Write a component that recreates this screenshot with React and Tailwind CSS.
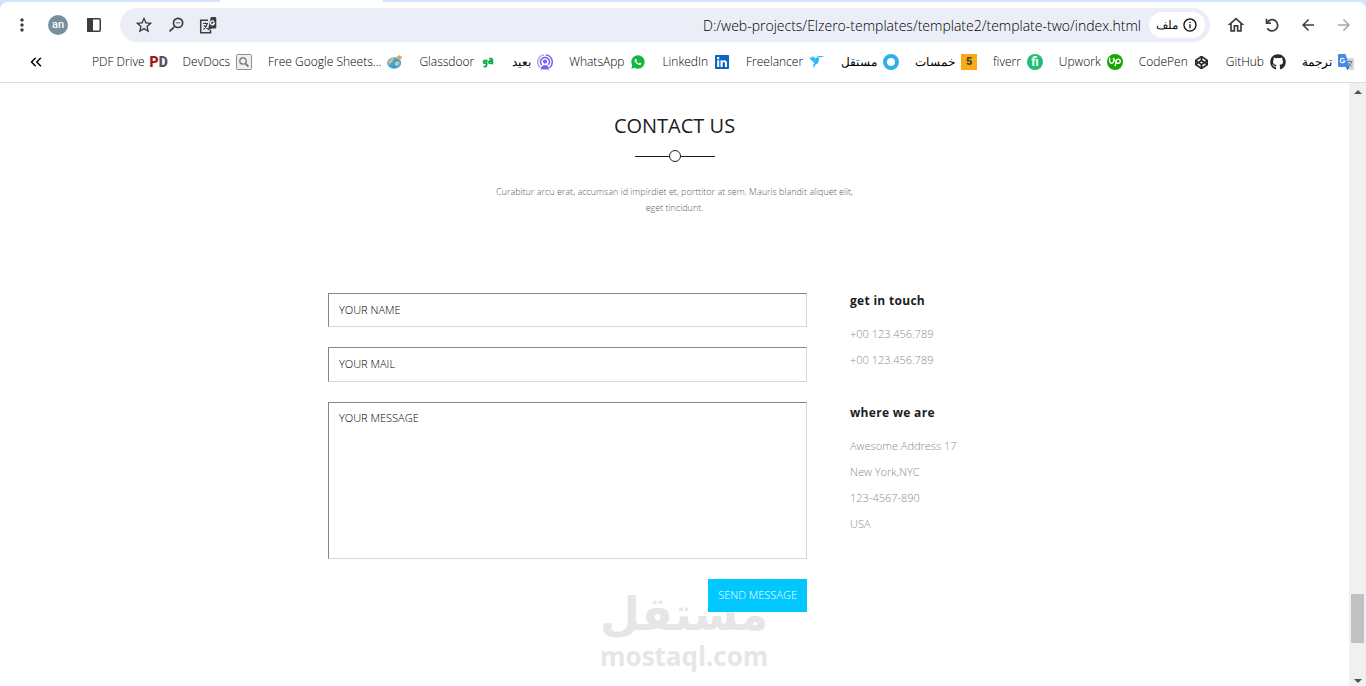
import { FaCodepen, FaGithub, FaLinkedin } from 'react-icons/fa';
import { MdArrowBack, MdArrowForward, MdInfoOutline, MdMoreVert, MdOutlineHome, MdOutlineZoomOut, MdStarBorder } from 'react-icons/md';
import { RiWhatsappFill } from 'react-icons/ri';
import { SiFreelancer, SiUpwork } from 'react-icons/si';
import { ChevronsLeft } from 'lucide-react';

const PdfDriveIcon = () => (
    <span className="flex h-4 w-4 items-center justify-center font-['Roboto',sans-serif] text-[14px] leading-4 font-black">
        <span className="text-[#a01818]">P</span>
        <span className="text-[#55555a]">D</span>
    </span>
);

const DevDocsIcon = () => (
    <svg width="16" height="16" viewBox="0 0 16 16" fill="none">
        <rect x="0.5" y="0.5" width="15" height="15" rx="1" fill="#eeeeee" stroke="#8e8e8e" />
        <circle cx="7" cy="7" r="3.2" stroke="#777" strokeWidth="1.3" />
        <path d="M9.4 9.4 12.4 12.6" stroke="#777" strokeWidth="1.8" />
    </svg>
);

const SheetsIcon = () => (
    <svg width="16" height="16" viewBox="0 0 16 16">
        <ellipse cx="7.2" cy="9" rx="7" ry="5.8" fill="#35a9dd" />
        <path d="M1 8.5c.8-2.6 3-4.4 5.4-4.8l1 1.5-2 1 .5 1.8-2.4 1.3L3 11.5z" fill="#d9b98a" />
        <path d="M8 8.2l3-1 1.8 1.6-1.2 2.5-2.6.7-1.4-2z" fill="#d3c497" />
        <path d="M5.5 12.2l2-.6 1 1.6-1.6 1.2z" fill="#5b83a8" />
        <path d="M9 1.5l2 1 1.4-1.8.8 1.7 2-.9-1 2.3.6 2-2.4-1.1-2.2.9.3-2z" fill="#f29a38" />
    </svg>
);

const GlassdoorIcon = () => (
    <svg width="16" height="16" viewBox="0 0 16 16" fill="none" stroke="#0caa41" strokeWidth="1.8">
        <path d="M6.6 5.5v5.2c0 1.3-1 1.9-2.2 1.9H3.6M6.6 6.6H5c-1.100 0-1.400.5-1.400 1.300s.5 1.300 1.400 1.300h1.600" />
        <path d="M9 4.600h2c.8 0 1.300.4 1.300 1.200v3.600h-2c-.9 0-1.400-.4-1.400-1.200s.5-1.200 1.400-1.200h2" />
    </svg>
);

const BaeedIcon = () => (
    <svg width="16" height="16" viewBox="0 0 16 16" fill="none" strokeLinecap="round">
        <path d="M3 13.2A7.2 7.2 0 0 1 6.5.9" stroke="#a9b4cf" strokeWidth="1.5" />
        <path d="M9.5.9A7.2 7.2 0 0 1 13 13.2" stroke="#7664f6" strokeWidth="1.5" />
        <path d="M4.4 10.5a4.4 4.4 0 1 1 7.2 0" stroke="#7664f6" strokeWidth="1.5" />
        <circle cx="8" cy="7.6" r="2.1" fill="#7664f6" />
        <path d="M3.8 15.5c.3-3 1.9-4.4 4.2-4.4s3.9 1.4 4.2 4.4z" fill="#7664f6" />
    </svg>
);

const FiverrIcon = () => (
    <span className="flex h-4 w-4 items-center justify-center rounded-full bg-[#1dbf73] font-['Roboto',sans-serif] text-[12px] leading-4 font-bold text-white">
        fi
    </span>
);

const UpworkIcon = () => (
    <span className="flex h-4 w-4 items-center justify-center rounded-full bg-[#14a800]">
        <SiUpwork size={12} color="#fff" />
    </span>
);

const KhamsatIcon = () => (
    <span className="flex h-4 w-4 items-center justify-center bg-[#f8ab12] font-['Roboto',sans-serif] text-[11px] leading-4 font-black text-[#4a4030]">
        5
    </span>
);

const CodepenIcon = () => (
    <span className="flex h-4 w-4 items-center justify-center">
        <FaCodepen size={13} color="#1e1f21" stroke="#1e1f21" strokeWidth={24} />
    </span>
);

const TranslateIcon = () => (
    <svg width="16" height="16" viewBox="0 0 16 16" fill="none">
        <path d="M6 4h9a1 1 0 0 1 1 1v10a1 1 0 0 1-1 1H9.5z" fill="#d6d8dc" />
        <path d="M9.5 7.5h5M12 6.3v1.2M13.6 7.5c-.4 2.2-1.7 3.7-3.4 4.7M10.6 9c.7 1.5 1.8 2.6 3.2 3.3" stroke="#6b7c93" />
        <path d="M1 0h6.5l4 13H1a1 1 0 0 1-1-1V1a1 1 0 0 1 1-1z" fill="#4889e4" />
        <path d="M8 13h3.5L9.2 16z" fill="#3563b8" />
        <path d="M6.4 5A2.3 2.3 0 1 0 6.9 7H4.7" stroke="#fff" strokeWidth="1.1" />
    </svg>
);

const TranslatePageIcon = () => (
    <svg width="18" height="18" viewBox="0 0 18 18" fill="none">
        <path d="M9 4.3H1.7v12.4H11.5V14" stroke="#3c3d40" strokeWidth="1.5" />
        <path d="M4 7.5h5M6.5 6.5v1M8.2 7.5c-.6 2.8-2 4.8-3.8 6M4.8 9.5l4 3.5" stroke="#3c3d40" strokeWidth="1.2" />
        <path d="M11.8 1H16a1.3 1.3 0 0 1 1.3 1.3v9A1.3 1.3 0 0 1 16 12.6h-3L8.8 14.5z" fill="#3c3d40" />
        <path d="M15 5.6a2 2 0 1 0 .4 1.6h-1.8" stroke="#fff" strokeWidth="1.2" />
    </svg>
);

const bookmarks = [
    { label: 'PDF Drive', icon: <PdfDriveIcon /> },
    { label: 'DevDocs', icon: <DevDocsIcon /> },
    { label: 'Free Google Sheets...', icon: <SheetsIcon /> },
    { label: 'Glassdoor', icon: <GlassdoorIcon /> },
    { label: 'بعيد', icon: <BaeedIcon /> },
    { label: 'WhatsApp', icon: <RiWhatsappFill size={16} color="#12b83f" /> },
    { label: 'LinkedIn', icon: <FaLinkedin size={16} color="#0a66c2" /> },
    { label: 'Freelancer', icon: <SiFreelancer size={16} color="#29b2fe" /> },
    { label: 'مستقل', icon: <span className="h-4 w-4 rounded-full border-4 border-[#2fb0ec]" /> },
    { label: 'خمسات', icon: <KhamsatIcon /> },
    { label: 'fiverr', icon: <FiverrIcon /> },
    { label: 'Upwork', icon: <UpworkIcon /> },
    { label: 'CodePen', icon: <CodepenIcon /> },
    { label: 'GitHub', icon: <FaGithub size={16} color="#24292f" /> },
    { label: 'ترجمة', icon: <TranslateIcon /> },
];

function IconButton({ label, children }) {
    return (
        <button type="button" aria-label={label} className="flex h-5 w-5 shrink-0 items-center justify-center">
            {children}
        </button>
    );
}

function Toolbar() {
    return (
        <div className="flex items-center gap-4 px-3 text-[#3c3d40]">
            <IconButton label="Menu"><MdMoreVert size={20} /></IconButton>
            <button type="button" className="h-5 w-5 shrink-0 rounded-full bg-[#78909c] font-['Roboto',sans-serif] text-[11px] leading-5 font-medium text-white">
                an
            </button>
            <IconButton label="Side panel">
                <svg width="16" height="16" viewBox="0 0 16 16" fill="none">
                    <rect x="1.75" y="1.75" width="12.5" height="12.5" rx="1" stroke="currentColor" strokeWidth="1.5" />
                    <path d="M1 1h6v14H1z" fill="currentColor" />
                </svg>
            </IconButton>
            <div className="flex h-[34px] min-w-0 flex-1 items-center gap-3 rounded-full bg-[#ebeef7] pr-[5px] pl-[14px]">
                <IconButton label="Bookmark"><MdStarBorder size={20} /></IconButton>
                <IconButton label="Zoom"><MdOutlineZoomOut size={20} className="-scale-x-100" /></IconButton>
                <IconButton label="Translate"><TranslatePageIcon /></IconButton>
                <div className="flex min-w-0 flex-1 items-center gap-2">
                    <input
                        aria-label="Address"
                        defaultValue="D:/web-projects/Elzero-templates/template2/template-two/index.html"
                        className="min-w-0 flex-1 bg-transparent text-right text-[14px] text-black outline-none"
                    />
                    <button type="button" className="flex h-[26px] shrink-0 items-center gap-1 rounded-full bg-white px-[7px] text-[12px] text-[#101114]">
                        ملف
                        <MdInfoOutline size={16} />
                    </button>
                </div>
            </div>
            <IconButton label="Home"><MdOutlineHome size={20} /></IconButton>
            <IconButton label="Reload">
                <svg width="16" height="16" viewBox="0 0 16 16" fill="none" stroke="currentColor" strokeWidth="1.7">
                    <path d="M2.5 1.8v4.4h4.4" />
                    <path d="M3 6A5.6 5.6 0 1 1 3.3 11.2" />
                </svg>
            </IconButton>
            <IconButton label="Back"><MdArrowBack size={18} /></IconButton>
            <IconButton label="Forward"><MdArrowForward size={18} color="#a5a6a9" /></IconButton>
        </div>
    );
}

function BookmarksBar() {
    return (
        <nav className="flex h-10 items-center justify-between pr-3 pl-[26px] text-[12px] text-black">
            <IconButton label="More bookmarks"><ChevronsLeft size={18} strokeWidth={2} /></IconButton>
            <div className="flex items-center gap-4">
                {bookmarks.map((item) => (
                    <a key={item.label} href="#" className="flex shrink-0 items-center gap-[6px] whitespace-nowrap">
                        {item.label}
                        {item.icon}
                    </a>
                ))}
            </div>
        </nav>
    );
}

function BrowserHeader() {
    return (
        <header className="border-b border-[#dddddf] bg-[#d3e3fd] font-['Open_Sans','DejaVu_Sans',sans-serif] font-light">
            <div className="flex h-[2px] pl-[220px]">
                <div className="w-[163px] bg-white" />
            </div>
            <div className="rounded-t-lg bg-white pt-[6px]">
                <Toolbar />
                <BookmarksBar />
            </div>
        </header>
    );
}

function Scrollbar() {
    return (
        <div className="flex w-[17px] shrink-0 flex-col items-center bg-[#f0f0f0] pt-[7px] pb-[3px]">
            <span className="border-x-4 border-b-4 border-x-transparent border-b-[#505050]" />
            <div className="flex-1" />
            <div className="mb-9 h-[49px] w-[13px] bg-[#c1c0c2]" />
            <span className="border-x-4 border-t-4 border-x-transparent border-t-[#505050]" />
        </div>
    );
}

const fieldClass =
    'block w-full border border-t-[#858585] border-r-[#d6d6d6] border-b-[#d6d6d6] border-l-[#858585] bg-white px-[10px] text-[11px] font-[350] text-black uppercase outline-none placeholder:text-black';

function ContactForm() {
    return (
        <form className="relative flex w-[479px] flex-col gap-5">
            <input type="text" aria-label="Your name" placeholder="Your name" className={`h-[34px] pb-[2px] ${fieldClass}`} />
            <input type="email" aria-label="Your mail" placeholder="Your mail" className={`h-[35px] pb-[2px] ${fieldClass}`} />
            <textarea aria-label="Your message" placeholder="Your message" className={`h-[157px] resize-none py-[7px] leading-4 ${fieldClass}`} />
            <button type="button" className="h-[33px] self-end bg-[#00c8ff] px-[10px] text-[11px] font-[350] text-white uppercase">
                Send message
            </button>
            <Watermark />
        </form>
    );
}

function Watermark() {
    return (
        <div className="pointer-events-none absolute top-[296px] left-[272px] -z-10 w-[166px] text-center font-bold text-[#e6e6e6]">
            <div lang="ar" className="font-['DejaVu_Sans',sans-serif] text-[46px] leading-[50px]">مستقل</div>
            <div className="font-['Open_Sans',sans-serif] text-[26px] leading-[34px]">mostaql.com</div>
        </div>
    );
}

function InfoBlock({ title, lines }) {
    return (
        <section>
            <h2 className="mb-3 text-[12px] leading-4 font-bold tracking-wide text-[#1c1c20]">{title}</h2>
            {lines.map((line, index) => (
                <p key={index} className="text-[11px] leading-[26px] font-[350] text-[#8c8c8c]">{line}</p>
            ))}
        </section>
    );
}

export default function App() {
    return (
        <div className="flex min-h-screen flex-col bg-white">
            <BrowserHeader />
            <div className="flex flex-1">
                <main className="isolate flex-1 pt-7 font-['Open_Sans',sans-serif] font-light">
                    <div className="flex flex-col items-center text-center">
                        <h1 className="text-[20px] leading-[30px] font-normal text-[#1c1c20]">CONTACT US</h1>
                        <div className="mt-[9px] flex w-20 items-center">
                            <span className="h-px flex-1 bg-[#1c1c20]" />
                            <span className="h-3 w-3 rounded-full border border-[#1c1c20]" />
                            <span className="h-px flex-1 bg-[#1c1c20]" />
                        </div>
                        <p className="mt-[22px] w-[370px] text-[9px] leading-4 text-[#606060]">
                            Curabitur arcu erat, accumsan id impirdiet et, porttitor at sem. Mauris blandit aliquet elit, eget tincidunt.
                        </p>
                    </div>
                    <div className="mx-auto mt-[77px] flex max-w-[693px] gap-[43px]">
                        <ContactForm />
                        <div className="flex flex-col gap-8">
                            <InfoBlock title="get in touch" lines={['+00 123.456.789', '+00 123.456.789']} />
                            <InfoBlock title="where we are" lines={['Awesome Address 17', 'New York,NYC', '123-4567-890', 'USA']} />
                        </div>
                    </div>
                </main>
                <Scrollbar />
            </div>
        </div>
    );
}
